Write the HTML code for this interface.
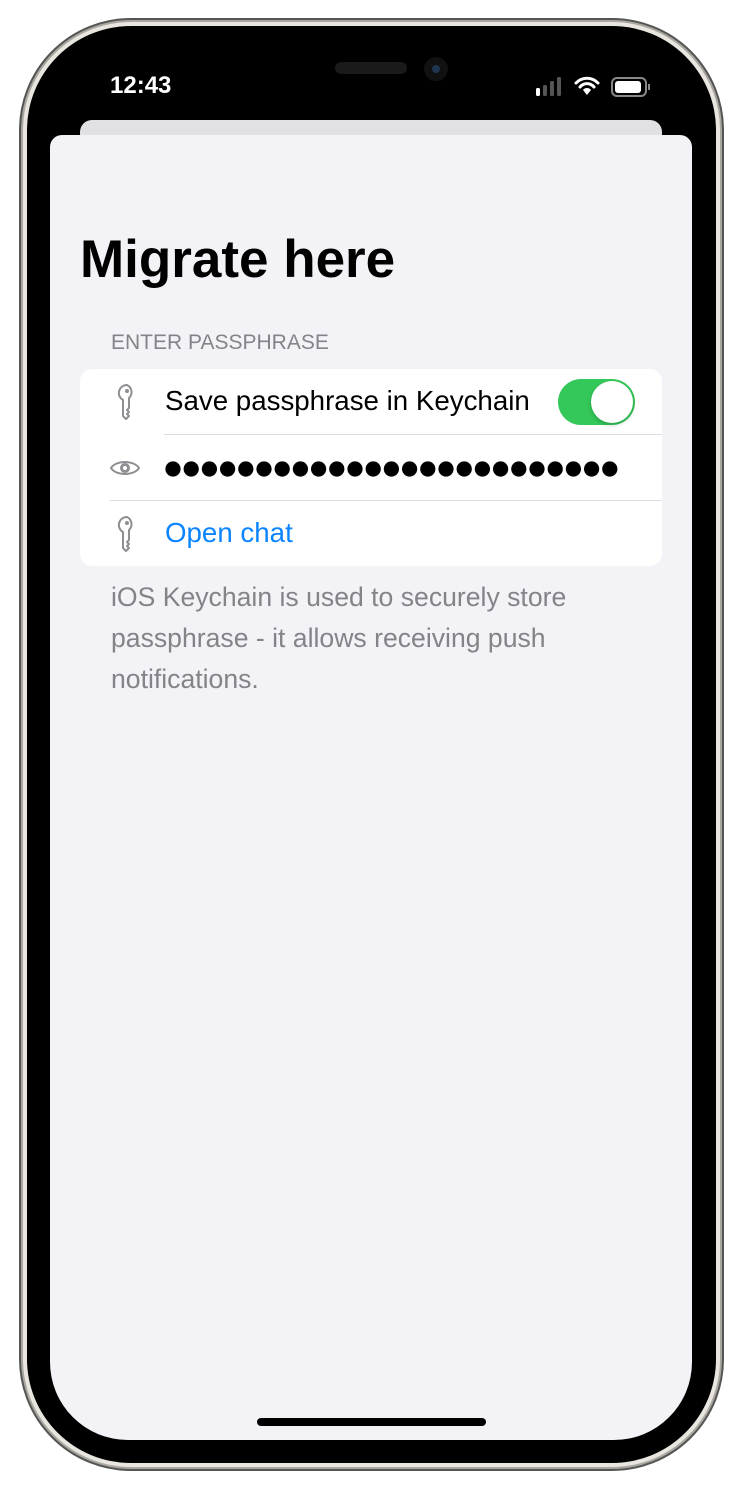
<!DOCTYPE html>
<html><head><style>
*{margin:0;padding:0;box-sizing:border-box}
body{width:742px;height:1489px;background:#fff;position:relative;overflow:hidden;font-family:"Liberation Sans",sans-serif}
.outer{position:absolute;left:19px;top:18px;width:705px;height:1453px;border-radius:112px;background:#a9a79f;border:2px solid #555}
.outer2{position:absolute;left:23px;top:22px;width:697px;height:1445px;border-radius:108px;background:#e8e6df}
.bezel{position:absolute;left:27px;top:26px;width:689px;height:1437px;border-radius:104px;background:#000}
.back{position:absolute;left:80px;top:120px;width:582px;height:40px;border-radius:12px;background:#e1e1e3}
.screen{position:absolute;left:50px;top:135px;width:642px;height:1305px;background:#f2f2f7;border-radius:12px 12px 78px 78px;overflow:hidden}
.abs{position:absolute}
.home{left:257px;top:1418px;width:229px;height:8px;border-radius:4px;background:#000}
</style></head><body>
<div class="outer"></div><div class="outer2"></div><div class="bezel"></div>
<div class="abs" style="left:335px;top:62px;width:72px;height:12px;border-radius:6px;background:#1a1a1a"></div>
<div class="abs" style="left:424px;top:57px;width:24px;height:24px;border-radius:12px;background:#111"></div>
<div class="abs" style="left:432px;top:65px;width:8px;height:8px;border-radius:4px;background:#1e3550"></div>
<div class="abs" style="left:110px;top:72px;color:#fff;font-size:24px;font-weight:bold">12:43</div>
<svg class="abs" style="left:536px;top:76px" width="120" height="22">
<rect x="0" y="12" width="4" height="8" rx="1.5" fill="#fff"/><rect x="7" y="9" width="4" height="11" rx="1.5" fill="#555"/><rect x="14" y="5" width="4" height="15" rx="1.5" fill="#555"/><rect x="21" y="1" width="4" height="19" rx="1.5" fill="#555"/>
<path d="M40 7a15 15 0 0 1 22 0M44 11a9 9 0 0 1 14 0" stroke="#fff" stroke-width="3" fill="none" stroke-linecap="round"/><path d="M47 14l4 5 4-5a5 5 0 0 0-8 0z" fill="#fff"/>
<rect x="76" y="2" width="34" height="18" rx="5" fill="none" stroke="#888" stroke-width="2"/><rect x="79" y="5" width="26" height="12" rx="3" fill="#fff"/><rect x="112" y="8" width="2" height="6" fill="#888"/>
</svg>
<div class="back"></div>
<div class="screen">
<div class="abs" style="left:30px;top:94px;font-size:53px;font-weight:bold;color:#000">Migrate here</div>
<div class="abs" style="left:61px;top:196px;font-size:21px;color:#838388">ENTER PASSPHRASE</div>
<div class="abs" style="left:30px;top:234px;width:582px;height:197px;background:#fff;border-radius:12px">
 <div class="abs" style="left:84px;top:65px;right:0;height:1px;background:#dcdce0"></div>
 <div class="abs" style="left:30px;top:131px;right:0;height:1px;background:#dcdce0"></div>
 <svg class="abs" style="left:36px;top:14px" width="22" height="38" viewBox="0 0 22 38"><path d="M11 2a8 8 0 0 0-4 15v16l3 3 3-3-2-2 2-2-2-2 2-2v-10a8 8 0 0 0-2-13z" fill="none" stroke="#8e8e93" stroke-width="2" stroke-linejoin="round"/><circle cx="11" cy="8" r="2" fill="#8e8e93"/></svg>
 <div class="abs" style="left:85px;top:16px;font-size:27.7px;color:#000">Save passphrase in Keychain</div>
 <div class="abs" style="left:478px;top:10px;width:77px;height:46px;border-radius:23px;background:#34c759"><div class="abs" style="left:33px;top:2px;width:42px;height:42px;border-radius:21px;background:#fff;box-shadow:0 2px 4px rgba(0,0,0,.2)"></div></div>
 <svg class="abs" style="left:29px;top:88px" width="32" height="22" viewBox="0 0 32 22"><path d="M2 11C7 3 25 3 30 11C25 19 7 19 2 11z" fill="none" stroke="#8e8e93" stroke-width="2"/><circle cx="16" cy="11" r="5" fill="#8e8e93"/><circle cx="16" cy="11" r="2" fill="#fff"/></svg>
 <svg class="abs" style="left:84px;top:90px" width="460" height="20">
  <g fill="#000">
  <circle cx="9" cy="10" r="7.6"/><circle cx="27.2" cy="10" r="7.6"/><circle cx="45.4" cy="10" r="7.6"/><circle cx="63.6" cy="10" r="7.6"/><circle cx="81.8" cy="10" r="7.6"/><circle cx="100" cy="10" r="7.6"/><circle cx="118.2" cy="10" r="7.6"/><circle cx="136.4" cy="10" r="7.6"/><circle cx="154.6" cy="10" r="7.6"/><circle cx="172.8" cy="10" r="7.6"/><circle cx="191" cy="10" r="7.6"/><circle cx="209.2" cy="10" r="7.6"/><circle cx="227.4" cy="10" r="7.6"/><circle cx="245.6" cy="10" r="7.6"/><circle cx="263.8" cy="10" r="7.6"/><circle cx="282" cy="10" r="7.6"/><circle cx="300.2" cy="10" r="7.6"/><circle cx="318.4" cy="10" r="7.6"/><circle cx="336.6" cy="10" r="7.6"/><circle cx="354.8" cy="10" r="7.6"/><circle cx="373" cy="10" r="7.6"/><circle cx="391.2" cy="10" r="7.6"/><circle cx="409.4" cy="10" r="7.6"/><circle cx="427.6" cy="10" r="7.6"/><circle cx="445.8" cy="10" r="7.6"/>
  </g></svg>
 <svg class="abs" style="left:36px;top:146px" width="22" height="38" viewBox="0 0 22 38"><path d="M11 2a8 8 0 0 0-4 15v16l3 3 3-3-2-2 2-2-2-2 2-2v-10a8 8 0 0 0-2-13z" fill="none" stroke="#8e8e93" stroke-width="2" stroke-linejoin="round"/><circle cx="11" cy="8" r="2" fill="#8e8e93"/></svg>
 <div class="abs" style="left:85px;top:148px;font-size:27.7px;color:#0a84ff">Open chat</div>
</div>
<div class="abs" style="left:61px;top:442px;width:520px;font-size:26.6px;line-height:41px;color:#838388">iOS Keychain is used to securely store passphrase - it allows receiving push notifications.</div>
</div>
<div class="abs home"></div>
</body></html>
